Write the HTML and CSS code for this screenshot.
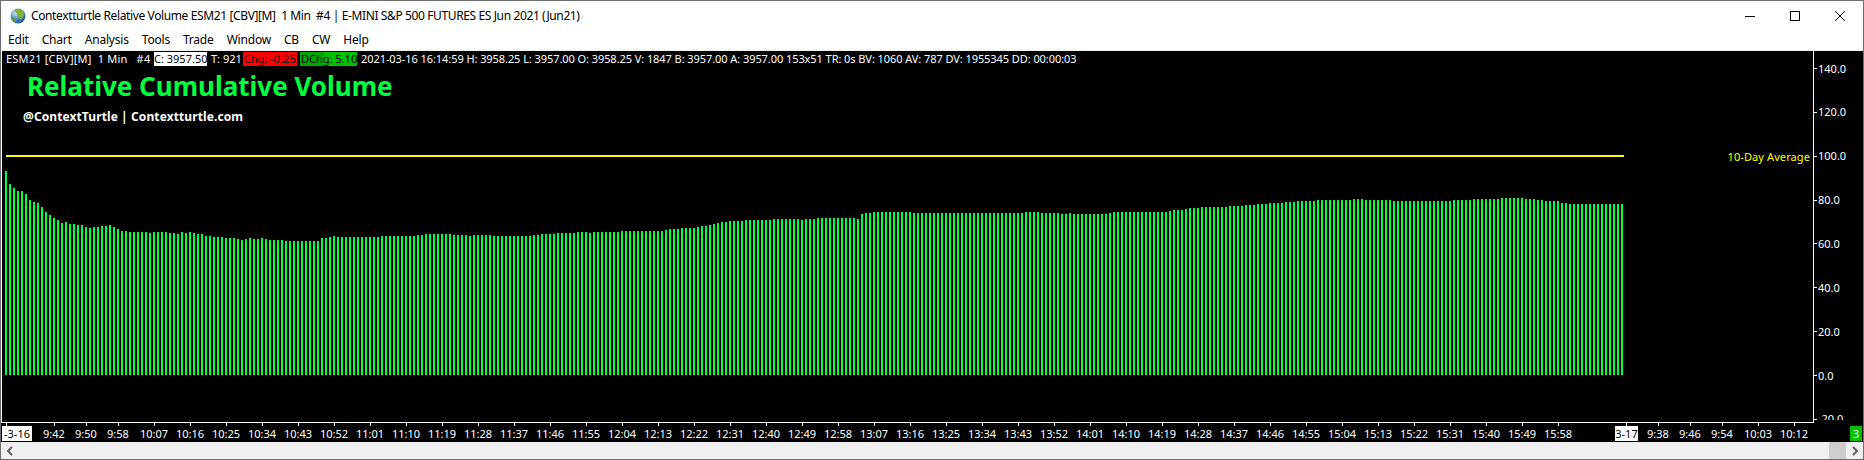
FILE: index.html
```html
<!DOCTYPE html>
<html lang="en">
<head>
  <meta charset="UTF-8">
  <title>Contextturtle Relative Volume ESM21</title>
  <link rel="stylesheet" href="styles.css">
</head>
<body>
  <div class="window">
    <div class="titlebar">
      <svg class="globe" width="16" height="16" viewBox="0 0 16 16">
        <defs>
          <radialGradient id="sea" cx="0.35" cy="0.3" r="0.8">
            <stop offset="0" stop-color="#cfe8f5"/>
            <stop offset="0.5" stop-color="#4f8fc4"/>
            <stop offset="1" stop-color="#1d4f86"/>
          </radialGradient>
        </defs>
        <circle cx="8" cy="8" r="7.5" fill="url(#sea)"/>
        <path d="M5 1.5 C8 0.5 12 1.5 14 4 C15 7 13 9 11.5 11 C10 12 9.5 9 8 8.5 C6.5 7.5 8 6 6.5 5 C5 4 4 3 5 1.5Z" fill="#7fb03a"/>
        <path d="M2 9 C4 9 6 10 6 12 C6 14 5 14.5 4.5 14 C3 13 2 11 2 9Z" fill="#5e9a35"/>
      </svg>
      <span class="title-text">Contextturtle Relative Volume ESM21 [CBV][M]&nbsp;&nbsp;1 Min&nbsp;&nbsp;#4 | E-MINI S&amp;P 500 FUTURES ES Jun 2021 (Jun21)</span>
      <div class="win-buttons">
        <svg width="10" height="10" viewBox="0 0 10 10"><path d="M0 5.5H10" stroke="#000" fill="none"/></svg>
        <svg width="10" height="10" viewBox="0 0 10 10"><rect x="0.5" y="0.5" width="9" height="9" stroke="#000" fill="none"/></svg>
        <svg width="10" height="10" viewBox="0 0 10 10"><path d="M0 0L10 10M10 0L0 10" stroke="#000" fill="none"/></svg>
      </div>
    </div>

    <div class="menubar">
      <span>Edit</span><span>Chart</span><span>Analysis</span><span>Tools</span><span>Trade</span><span>Window</span><span>CB</span><span>CW</span><span>Help</span>
    </div>

    <div class="chart">
      <div class="chart-main">
        <div class="plot">
          <div class="info">
            <span class="info-sym">ESM21 [CBV][M]&nbsp;&nbsp;1 Min&nbsp;&nbsp;&nbsp;#4</span>
            <span class="cell cell-close">C: 3957.50</span>
            <span class="info-t">T: 921</span>
            <span class="cell cell-chg">Chg: -0.25</span>
            <span class="cell cell-dchg">DChg: 5.10</span>
            <span class="info-rest">2021-03-16 16:14:59 H: 3958.25 L: 3957.00 O: 3958.25 V: 1847 B: 3957.00 A: 3957.00 153x51 TR: 0s BV: 1060 AV: 787 DV: 1955345 DD: 00:00:03</span>
          </div>
          <div class="study-title">Relative Cumulative Volume</div>
          <div class="study-sub">@ContextTurtle | Contextturtle.com</div>
          <div class="ref-row">
            <div class="ref-line"></div>
            <span class="ref-label">10-Day Average</span>
          </div>
          <div class="bars" id="bars"></div>
        </div>
        <div class="price-axis">
          <div class="price">140.0</div>
          <div class="price">120.0</div>
          <div class="price">100.0</div>
          <div class="price">80.0</div>
          <div class="price">60.0</div>
          <div class="price">40.0</div>
          <div class="price">20.0</div>
          <div class="price">0.0</div>
          <div class="price">-20.0</div>
        </div>
      </div>
      <div class="time-row">
        <div class="time-axis" id="timeAxis"></div>
        <span class="counter">3</span>
      </div>
    </div>

    <div class="scrollbar">
      <svg width="8" height="10" viewBox="0 0 8 10"><path d="M6 1L2 5L6 9" stroke="#606060" stroke-width="2" fill="none"/></svg>
      <div class="scroll-right">
        <div class="thumb"></div>
        <svg width="8" height="10" viewBox="0 0 8 10"><path d="M2 1L6 5L2 9" stroke="#606060" stroke-width="2" fill="none"/></svg>
      </div>
    </div>
  </div>

  <script src="chart.js"></script>
</body>
</html>
```

FILE: styles.css
```css
* {
  box-sizing: border-box;
}

body {
  margin: 0;
  font-family: "Noto Sans", sans-serif;
  background: #fff;
}

.window {
  display: flex;
  flex-direction: column;
  height: 460px;
  border: 1px solid #6e6e6e;
  overflow: hidden;
}

.titlebar {
  display: flex;
  align-items: center;
  height: 29px;
  flex: none;
  padding-left: 9px;
  font-size: 12px;
  letter-spacing: -0.38px;
  color: #000;
}

.title-text {
  margin-left: 5px;
  white-space: nowrap;
}

.win-buttons {
  display: flex;
  gap: 35px;
  margin-left: auto;
  margin-right: 18px;
}

.menubar {
  display: flex;
  height: 21px;
  flex: none;
  padding-left: 7px;
  padding-bottom: 1px;
  align-items: center;
  border-bottom: 1px solid #f0f0f0;
  font-size: 12px;
  letter-spacing: -0.2px;
}

.menubar span {
  margin-right: 13px;
}

.chart {
  display: flex;
  flex-direction: column;
  flex: 1;
  background: #000;
  color: #fff;
  font-family: "Noto Sans", sans-serif;
  font-size: 11px;
}

.chart-main {
  display: flex;
  height: 372px;
}

.plot {
  display: flex;
  flex-direction: column;
  width: 1813px;
  padding-bottom: 47px;
  border-left: 1px solid #fff;
  border-right: 1px solid #fff;
  border-bottom: 1px solid #fff;
}

.info {
  display: flex;
  height: 14px;
  margin-top: 1px;
  padding-left: 4px;
  line-height: 14px;
  white-space: nowrap;
}

.info-sym {
  width: 148px;
  letter-spacing: 0.2px;
}

.cell {
  overflow: hidden;
  color: #000;
}

.cell-close {
  width: 53px;
  background: #fff;
}

.info-t {
  width: 36px;
  padding-left: 4px;
}

.cell-chg {
  width: 54px;
  background: #f00;
  padding-left: 1px;
}

.cell-dchg {
  width: 57px;
  margin-left: 3px;
  padding-left: 1px;
  background: linear-gradient(90deg, #00a800 42%, #00c000 42%);
}

.info-rest {
  margin-left: 4px;
  letter-spacing: -0.07px;
}

.study-title {
  height: 30px;
  margin-top: 5px;
  padding-left: 25px;
  font-size: 26px;
  font-weight: bold;
  line-height: 30px;
  color: #00ff40;
}

.study-sub {
  height: 16px;
  margin-top: 8px;
  padding-left: 21px;
  font-size: 12px;
  font-weight: bold;
  letter-spacing: 0.1px;
  line-height: 16px;
}

.ref-row {
  display: flex;
  justify-content: space-between;
  align-items: center;
  height: 14px;
  margin-top: 24px;
  padding: 0 3px 0 4px;
  color: #ff0;
}

.ref-line {
  width: 1618px;
  height: 2px;
  background: #ff0;
}

.ref-label {
  letter-spacing: 0.1px;
}

.bars {
  display: flex;
  flex: 1;
  gap: 2px;
  align-items: flex-end;
  padding-left: 3px;
}

.bar {
  width: 2px;
  flex: none;
  background: #00ff40;
}

.price-axis {
  display: flex;
  flex-direction: column;
  gap: 29.86px;
  height: 369px;
  padding-top: 10.5px;
  overflow: hidden;
}

.price {
  display: flex;
  align-items: center;
  flex: none;
  height: 14px;
  line-height: 14px;
}

.price::before {
  content: "";
  width: 3px;
  height: 1px;
  margin-right: 1px;
  background: #fff;
}

.time-row {
  display: flex;
  justify-content: space-between;
  height: 19px;
}

.time-axis {
  display: flex;
  padding-left: 5px;
}

.tick {
  flex: none;
  height: 19px;
}

.tick::before {
  content: "";
  display: block;
  width: 1px;
  height: 3px;
  background: #fff;
}

.tick-label {
  display: block;
  width: 40px;
  margin-left: -20px;
  line-height: 15px;
  text-align: center;
  white-space: nowrap;
}

.tick-date {
  display: block;
  height: 15px;
  overflow: hidden;
  background: #fff;
  color: #000;
  line-height: 15px;
  text-align: center;
  white-space: nowrap;
}

.counter {
  width: 12px;
  height: 15px;
  margin-top: 3px;
  margin-right: 1px;
  background: #00c000;
  line-height: 15px;
  text-align: center;
}

.scrollbar {
  display: flex;
  align-items: center;
  justify-content: space-between;
  flex: none;
  height: 17px;
  padding-left: 5px;
  background: #f0f0f0;
}

.scroll-right {
  display: flex;
  align-items: center;
  gap: 5px;
  height: 100%;
  padding-right: 4px;
}

.thumb {
  width: 17px;
  height: 100%;
  background: #cdcdcd;
}
```

FILE: chart.js
```js
// bar tops as [y, how many bars], y measured from the top of the window
const tops = [
  [171,1],[184,1],[188,1],[191,2],[194,1],[200,1],[202,1],[203,1],[207,1],[212,1],[215,1],[218,1],[220,1],
  [223,1],[222,1],[224,2],[225,2],[227,1],[228,1],[227,2],[226,2],[225,1],[227,1],[229,1],[231,2],[232,5],
  [233,1],[232,4],[233,2],[234,1],[232,1],[233,1],[232,1],[233,1],[234,2],[236,2],[237,3],[238,3],[239,1],
  [240,1],[239,1],[238,1],[239,2],[238,1],[239,1],[240,4],[241,9],[238,2],[237,1],[236,1],[237,11],[236,9],
  [235,2],[234,7],[235,4],[236,1],[235,5],[236,10],[235,2],[234,4],[233,5],[232,3],[233,1],[232,7],[231,11],
  [230,1],[229,3],[228,4],[227,1],[226,2],[225,1],[224,1],[223,1],[222,2],[221,4],[220,7],[219,7],[220,1],
  [219,3],[218,10],[219,1],[214,1],[213,2],[212,10],[213,28],[212,4],[213,5],[214,2],[213,1],[214,9],[213,1],
  [212,14],[211,1],[210,3],[209,1],[208,3],[207,7],[206,4],[205,3],[204,3],[203,4],[202,3],[201,5],[200,9],
  [199,3],[200,7],[201,15],[200,5],[199,7],[198,6],[199,3],[200,2],[201,4],[203,2],[204,14]
];
const baseline = 375;

const bars = document.getElementById('bars');
tops.forEach(([y, n]) => {
  for (let i = 0; i < n; i++) {
    const bar = document.createElement('div');
    bar.className = 'bar';
    bar.style.height = (baseline - y) + 'px';
    bars.appendChild(bar);
  }
});

// [tick x in the window, label, date label box width]
const ticks = [[6, '-3-16', 30], [54, '9:42'], [86, '9:50'], [118, '9:58']];
let minutes = 10 * 60 + 7;
for (let x = 154; x <= 1558; x += 36) {
  const h = Math.floor(minutes / 60);
  const m = String(minutes % 60).padStart(2, '0');
  ticks.push([x, h + ':' + m]);
  minutes += 9;
}
ticks.push([1626, '3-17', 23], [1658, '9:38'], [1690, '9:46'], [1722, '9:54'], [1758, '10:03'], [1794, '10:12']);

const axis = document.getElementById('timeAxis');
ticks.forEach(([x, text, box], i) => {
  const tick = document.createElement('div');
  tick.className = 'tick';
  const next = ticks[i + 1];
  tick.style.width = (next ? next[0] - x : 20) + 'px';

  const label = document.createElement('span');
  label.textContent = text;
  if (box) {
    label.className = 'tick-date';
    label.style.width = box + 'px';
    label.style.marginLeft = (x === 6 ? -4 : -11) + 'px';
  } else {
    label.className = 'tick-label';
  }
  tick.appendChild(label);
  axis.appendChild(tick);
});
```
